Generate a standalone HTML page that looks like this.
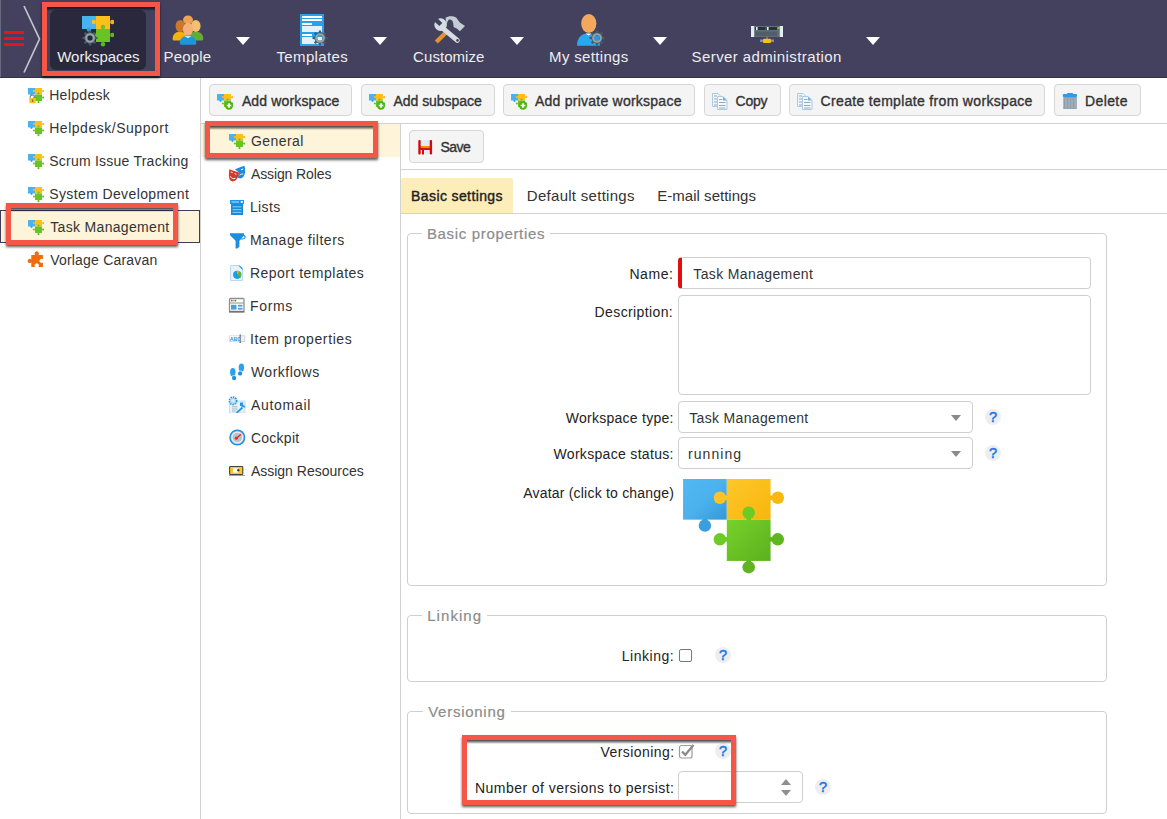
<!DOCTYPE html>
<html><head><meta charset="utf-8">
<style>
*{box-sizing:border-box;margin:0;padding:0}
html,body{width:1167px;height:819px;overflow:hidden;background:#fff}
body{position:relative;font-family:"Liberation Sans",sans-serif;color:#333}
.a{position:absolute}
.t{position:absolute;white-space:nowrap;line-height:1;font-size:14px;color:#333}
.hd{position:absolute;left:0;top:0;width:1167px;height:78px;background:#43415e;border-bottom:1px solid #34314c}
.ht{position:absolute;white-space:nowrap;line-height:1;font-size:15px;color:#eeeeee;top:49px}
.tri{position:absolute;top:37px;width:0;height:0;border-left:7px solid transparent;border-right:7px solid transparent;border-top:8px solid #fff}
.btn{position:absolute;top:84px;height:32px;background:#f4f4f4;border:1px solid #d6d6d6;border-radius:4px}
.bt{position:absolute;white-space:nowrap;line-height:1;font-size:14px;font-weight:normal;color:#333;-webkit-text-stroke:0.35px #333;top:94px}
.red{position:absolute;border:5px solid #f45747;box-shadow:0 2px 2.5px rgba(0,0,0,.65)}
.red::after{content:"";position:absolute;left:0;right:0;top:0;height:4px;background:linear-gradient(rgba(0,0,0,.72),rgba(0,0,0,.45) 45%,rgba(0,0,0,0))}
.fs{position:absolute;left:407px;width:700px;border:1px solid #cfcfcf;border-radius:4px}
.lg{position:absolute;white-space:nowrap;line-height:1;font-size:15px;color:#8c8c8c;-webkit-text-stroke:0.2px #8c8c8c;background:#fff;padding:0 5px}
.lb{position:absolute;white-space:nowrap;line-height:1;font-size:14px;color:#222;text-align:right}
.inp{position:absolute;border:1px solid #cfcfcf;border-radius:4px;background:#fff}
.q{position:absolute;width:16px;height:16px;border-radius:8px;background:#eeeef0;color:#1b78e8;font-weight:normal;-webkit-text-stroke:0.5px #1b78e8;font-size:14.5px;line-height:17px;text-align:center}
.dd{position:absolute;width:0;height:0;border-left:5px solid transparent;border-right:5px solid transparent;border-top:6px solid #8a8a8a}
</style></head><body>

<svg width="0" height="0" style="position:absolute">
<defs>
<symbol id="pz" viewBox="0 0 32 32">
<rect x="0" y="0" width="14" height="13" fill="#4ab3ef"/><circle cx="7" cy="13.6" r="2.2" fill="#3aa0e0"/>
<rect x="14" y="0" width="14" height="13" fill="#fdbf1c"/><circle cx="11.8" cy="6" r="2.2" fill="#fdbf1c"/><circle cx="30.3" cy="6" r="2.2" fill="#f5b414"/>
<rect x="14" y="13" width="14" height="13" fill="#67c424"/><circle cx="21" cy="11" r="2.2" fill="#67c424"/><circle cx="30.3" cy="19" r="2.2" fill="#5fb81e"/><circle cx="21" cy="28.2" r="2.2" fill="#5fb81e"/><circle cx="11.8" cy="19" r="2.2" fill="#67c424"/>
</symbol>
<symbol id="gear" viewBox="0 0 16 16">
<path d="M13.45 6.69 L15.52 6.93 L15.52 9.07 L13.45 9.31 L12.77 10.93 L14.08 12.56 L12.56 14.08 L10.93 12.77 L9.31 13.45 L9.07 15.52 L6.93 15.52 L6.69 13.45 L5.07 12.77 L3.44 14.08 L1.92 12.56 L3.23 10.93 L2.55 9.31 L0.48 9.07 L0.48 6.93 L2.55 6.69 L3.23 5.07 L1.92 3.44 L3.44 1.92 L5.07 3.23 L6.69 2.55 L6.93 0.48 L9.07 0.48 L9.31 2.55 L10.93 3.23 L12.56 1.92 L14.08 3.44 L12.77 5.07Z M10.7 8A2.7 2.7 0 1 0 5.3 8A2.7 2.7 0 1 0 10.7 8Z" fill="#4b5b63" fill-rule="evenodd"/>
<circle cx="8" cy="8" r="3.8" fill="none" stroke="#93a4ad" stroke-width="2.1"/>
</symbol>
<symbol id="plus" viewBox="0 0 10 10">
<circle cx="5" cy="5" r="4.6" fill="#4cb51c"/><path d="M5 2.4V7.6M2.4 5H7.6" stroke="#fff" stroke-width="1.9"/>
</symbol>
<symbol id="copy" viewBox="0 0 16 16">
<path d="M0.5 0.5H6L8 2.5V13.5H0.5Z" fill="#eef6fc" stroke="#a9cbe3" stroke-width="1"/>
<path d="M2 3H5M2 6H5M2 9H5M2 12H5" stroke="#9aa8b6" stroke-width="1.2"/>
<path d="M5.5 3.5H11L15 7.5V16.5H5.5Z" fill="#f4f9fd" stroke="#a9cbe3" stroke-width="1"/>
<path d="M11 3.5V7.5H15Z" fill="#6bb6ea"/>
<path d="M7 6.5H10.5M7 9.5H13.5M7 12.5H13.5M7 15H13.5" stroke="#9aa8b6" stroke-width="1.2"/>
</symbol>
</defs></svg>
<!-- HEADER -->
<div class="hd"></div>
<div class="a" style="left:0;top:0;width:1px;height:77px;background:#6a6880"></div>
<div class="a" style="left:4px;top:31px;width:20px;height:3px;background:#e3141d"></div>
<div class="a" style="left:4px;top:37px;width:20px;height:3px;background:#e3141d"></div>
<div class="a" style="left:4px;top:43px;width:20px;height:3px;background:#e3141d"></div>
<svg class="a" style="left:0;top:0" width="60" height="77"><polyline points="24,6 39.5,39 24,72.5" fill="none" stroke="#c4c4cc" stroke-width="1.7"/></svg>

<div class="a" style="left:50px;top:10px;width:96px;height:60px;background:#2a283d;border-radius:6px"></div>
<div class="red" style="left:42px;top:2px;width:118px;height:74px;"></div>

<div class="ht" style="left:57.2px;letter-spacing:0.004px">Workspaces</div>
<div class="ht" style="left:163.5px;letter-spacing:0.2px">People</div>
<div class="ht" style="left:276.5px;letter-spacing:0.35px">Templates</div>
<div class="ht" style="left:413.1px;letter-spacing:0.054px">Customize</div>
<div class="ht" style="left:549.1px;letter-spacing:0.33px">My settings</div>
<div class="ht" style="left:691.6px;letter-spacing:0.4px">Server administration</div>
<div class="tri" style="left:236px"></div>
<div class="tri" style="left:373px"></div>
<div class="tri" style="left:510px"></div>
<div class="tri" style="left:653px"></div>
<div class="tri" style="left:866px"></div>

<!-- HEADER ICONS -->
<svg class="a" style="left:82px;top:16px" width="34" height="31"><use href="#pz" width="32" height="32"/></svg>
<svg class="a" style="left:82px;top:30px" width="16" height="16"><use href="#gear" width="16" height="16"/></svg>

<svg class="a" style="left:168px;top:12px" width="36" height="34" viewBox="168 12 36 34">
<ellipse cx="188" cy="19.8" rx="5" ry="4.4" fill="#efa455"/>
<path d="M172.6 39C172.6 34.5 175.5 31.8 180 31.8C184.5 31.8 187 34.5 187 40.6H174.5C173.3 40.6 172.6 40 172.6 39Z" fill="#f3b30a"/>
<ellipse cx="180.3" cy="26.1" rx="4.8" ry="6.1" fill="#c9782c"/>
<path d="M189 40.6C189 34.5 191.5 31.8 196 31.8C200.5 31.8 203.3 34.5 203.3 39C203.3 40 202.6 40.6 201.5 40.6Z" fill="#63ad36"/>
<ellipse cx="195.8" cy="26" rx="4.8" ry="6.1" fill="#f3c06f"/>
<path d="M179.8 43C179.8 38.5 183 35.8 188 35.8C193 35.8 196.3 38.5 196.3 43C196.3 44.2 195.5 44.8 194.3 44.8H181.8C180.6 44.8 179.8 44.2 179.8 43Z" fill="#1b97de"/>
<path d="M184.5 36.3H191.5L188 38Z" fill="#fff"/>
<ellipse cx="188" cy="29.3" rx="5.1" ry="6.5" fill="#f5b07a"/>
</svg>

<svg class="a" style="left:299px;top:13px" width="30" height="34" viewBox="299 13 30 34">
<rect x="300" y="14" width="24" height="32" fill="#28a0ea"/>
<rect x="302" y="16" width="20" height="2" fill="#fff"/><rect x="302" y="19" width="20" height="2" fill="#fff"/>
<rect x="302" y="23" width="10" height="2" fill="#fff"/><rect x="302" y="26" width="20" height="6" fill="#e4f1fb"/>
<rect x="302" y="34" width="10" height="2" fill="#fff"/><rect x="302" y="37" width="20" height="7" fill="#e4f1fb"/>
</svg>
<svg class="a" style="left:312px;top:30px" width="16" height="16"><use href="#gear" width="16" height="16"/></svg>

<svg class="a" style="left:431px;top:14px" width="36" height="32" viewBox="431 14 36 32">
<path d="M436.3 42L446.5 32" stroke="#e3922c" stroke-width="4.4"/>
<path d="M445.5 17.7C448 15.8 453 15.5 456.3 17.7L459.8 22.5L465 26L459.8 31.3L457.1 28.7L453.6 27C453.5 24 453 21.5 452 20.5C451 19.5 449.5 19.3 448.5 20C447.5 21 447 23 446.6 25.2Z" fill="#c3cdd4"/>
<path d="M443.5 28.8L457.3 40.3" stroke="#d5dde3" stroke-width="5" stroke-linecap="round"/>
<circle cx="457.5" cy="40.4" r="1.3" fill="#43415e"/>
<circle cx="440.6" cy="24.6" r="6.3" fill="#d5dde3"/>
<path d="M435.5 16.3L442.3 23L439.3 26L432.2 19.5Z" fill="#43415e"/>
</svg>

<svg class="a" style="left:576px;top:13px" width="30" height="34" viewBox="576 13 30 34">
<path d="M577 45.8C577 38 581 33.5 588 33.5C595 33.5 600 38 600 45.8Z" fill="#2ba7ee"/>
<path d="M585.5 33.5H591.5L588.5 35.5Z" fill="#fff"/>
<ellipse cx="588.8" cy="23.5" rx="7.6" ry="9.6" fill="#f4a85e"/>
</svg>
<svg class="a" style="left:589px;top:30px" width="16" height="16" viewBox="0 0 16 16"><circle cx="8" cy="8" r="2.6" fill="#1e9bef"/><use href="#gear" width="16" height="16"/></svg>

<svg class="a" style="left:750px;top:25px" width="35" height="20" viewBox="750 25 35 20">
<rect x="751" y="26" width="32" height="11" fill="#5f6e78"/>
<rect x="751" y="26" width="3.2" height="11" fill="#e6edf2"/><rect x="779.8" y="26" width="3.2" height="11" fill="#e6edf2"/>
<rect x="755" y="27" width="10.5" height="3" fill="#27333a"/><rect x="766.5" y="27" width="10.5" height="3" fill="#27333a"/>
<rect x="756" y="27" width="1.6" height="3" fill="#e8eef2"/><rect x="767" y="27" width="1.6" height="3" fill="#e8eef2"/>
<rect x="777.5" y="27" width="2" height="2" fill="#6ed02a"/>
<path d="M756 31.5V36M758 31.5V36M760 31.5V36M762 31.5V36M764 31.5V36M766 31.5V36M768 31.5V36M770 31.5V36M772 31.5V36M774 31.5V36M776 31.5V36" stroke="#414d55" stroke-width="0.9"/>
<rect x="766.3" y="37" width="1.4" height="2" fill="#7d8c96"/>
<rect x="760" y="39.5" width="14" height="2.4" fill="#8795a0"/>
<rect x="763" y="38.7" width="8" height="4.4" rx="1" fill="#f9c112"/>
</svg>

<!-- COLUMNS -->
<div class="a" style="left:200px;top:78px;width:1px;height:741px;background:#d2d2d2"></div>
<div class="a" style="left:201px;top:123px;width:966px;height:1px;background:#d2d2d2"></div>
<div class="a" style="left:400px;top:124px;width:1px;height:695px;background:#d2d2d2"></div>
<div class="a" style="left:401px;top:169px;width:766px;height:1px;background:#d2d2d2"></div>
<div class="a" style="left:401px;top:213px;width:766px;height:1px;background:#d2d2d2"></div>

<!-- SIDEBAR -->
<div class="a" style="left:0;top:210px;width:200px;height:33px;background:#fdf4d9;border:1px solid #3f3c5a"></div>
<div class="t" style="left:49.2px;top:88px;letter-spacing:0.327px">Helpdesk</div>
<div class="t" style="left:49.2px;top:121px;letter-spacing:0.523px">Helpdesk/Support</div>
<div class="t" style="left:49.2px;top:154px;letter-spacing:0.236px">Scrum Issue Tracking</div>
<div class="t" style="left:49.2px;top:187px;letter-spacing:0.385px">System Development</div>
<div class="t" style="left:50.2px;top:220px;letter-spacing:0.332px">Task Management</div>
<div class="t" style="left:50.2px;top:253px;letter-spacing:0.2px">Vorlage Caravan</div>
<div class="red" style="left:6px;top:203px;width:172px;height:42px"></div>

<!-- MIDDLE -->
<div class="a" style="left:201px;top:124px;width:199px;height:33px;background:#fdf4d9"></div>
<div class="t" style="left:250.9px;top:134px;letter-spacing:0.453px">General</div>
<div class="t" style="left:250.9px;top:167px;letter-spacing:-0.103px">Assign Roles</div>
<div class="t" style="left:249.9px;top:200px;letter-spacing:0.375px">Lists</div>
<div class="t" style="left:249.9px;top:233px;letter-spacing:0.499px">Manage filters</div>
<div class="t" style="left:249.9px;top:266px;letter-spacing:0.487px">Report templates</div>
<div class="t" style="left:249.9px;top:299px;letter-spacing:0.7px">Forms</div>
<div class="t" style="left:249.9px;top:332px;letter-spacing:0.605px">Item properties</div>
<div class="t" style="left:250.9px;top:365px;letter-spacing:0.496px">Workflows</div>
<div class="t" style="left:250.9px;top:398px;letter-spacing:0.726px">Automail</div>
<div class="t" style="left:250.9px;top:431px;letter-spacing:0.263px">Cockpit</div>
<div class="t" style="left:250.9px;top:464px;letter-spacing:-0.004px">Assign Resources</div>
<div class="red" style="left:205px;top:121px;width:173px;height:37px"></div>

<!-- SIDEBAR ICONS -->
<svg class="a" style="left:28px;top:88px" width="17" height="16"><use href="#pz" width="16" height="16"/>
<path d="M2.2 10.5V9.3C2.2 7.8 3.2 7 4.5 7C5.8 7 6.8 7.8 6.8 9.3V10.5" fill="none" stroke="#7d8a96" stroke-width="1.1"/>
<rect x="1.3" y="10" width="6.4" height="5.2" fill="#f6c417"/><rect x="3.9" y="11.5" width="1.2" height="2.3" fill="#6a6a6a"/></svg>
<svg class="a" style="left:28px;top:121px" width="17" height="16"><use href="#pz" width="16" height="16"/></svg>
<svg class="a" style="left:28px;top:154px" width="17" height="16"><use href="#pz" width="16" height="16"/></svg>
<svg class="a" style="left:28px;top:187px" width="17" height="16"><use href="#pz" width="16" height="16"/></svg>
<svg class="a" style="left:28px;top:220px" width="17" height="16"><use href="#pz" width="16" height="16"/></svg>
<svg class="a" style="left:27px;top:251px" width="18" height="18" viewBox="0 0 18 18">
<path d="M4.3 4H8.2A2.1 2.1 0 1 1 11.3 4H15.9V8.2A2.1 2.1 0 1 0 15.9 11.6V15.9H11.3A2.1 2.1 0 1 0 8.2 15.9H4.3V11.4A2.1 2.1 0 1 1 4.3 8.4Z" fill="#ee6c0c"/>
</svg>

<!-- MIDDLE ICONS -->
<svg class="a" style="left:229px;top:134px" width="17" height="16"><use href="#pz" width="16" height="16"/></svg>
<svg class="a" style="left:224px;top:163px" width="24" height="24" viewBox="224 163 24 24">
<path d="M235 169.3C238 168 241 166.8 244.3 165.8C245.6 169 245.6 173.5 243.6 176.5C242 178.6 239.5 178.9 237.5 177.6L238.8 172.5Z" fill="#1e8ad8"/>
<path d="M241 169.6L243.3 169.1M239.6 175.2C240.8 174.2 242 173.9 243.2 174" stroke="#fff" stroke-width="1" fill="none"/>
<path d="M229.2 169.3L238.9 172.4C238.7 176 237.2 180 233.7 181.3C230.6 181.9 229 179.2 228.9 176Z" fill="#d9372b"/>
<path d="M230.8 172L232.6 172.6M234.6 173.6L236.4 174.3M230.3 176.3C231.3 178.6 233.6 179.2 235.4 178.2" stroke="#fff" stroke-width="1" fill="none"/>
</svg>
<svg class="a" style="left:229px;top:199px" width="16" height="17" viewBox="0 0 16 17">
<rect x="1" y="1" width="14" height="4" fill="#1e95e6"/><rect x="2" y="5" width="12" height="11" fill="#1a8ad9"/>
<rect x="2.5" y="2.3" width="7.5" height="1.3" fill="#8fd0f7"/><rect x="11.8" y="2" width="2" height="1.8" fill="#fff"/>
<rect x="3.5" y="7.2" width="9" height="1.2" fill="#7cc4f0"/><rect x="3.5" y="10" width="9" height="1.2" fill="#7cc4f0"/><rect x="3.5" y="12.8" width="9" height="1.2" fill="#7cc4f0"/>
</svg>
<svg class="a" style="left:229px;top:232px" width="17" height="17" viewBox="0 0 17 17">
<path d="M1 1.2H15V3.4L10.4 8.8V14.8L8.3 16.5H6.6V8.8L1 3.2Z" fill="#1a8fe0"/>
<path d="M12.5 3.3C15.5 3 16.3 4.2 16 5.5C15.8 6.8 14 7 11.5 7" fill="none" stroke="#1a8fe0" stroke-width="1.2"/>
</svg>
<svg class="a" style="left:229px;top:264px" width="16" height="18" viewBox="0 0 16 18">
<path d="M1.5 1.5H9.5L13.5 5.5V16.5H1.5Z" fill="#e6f3fb" stroke="#bcd8ea" stroke-width="1"/>
<path d="M9.3 1.5L13.7 5.9V4.3L10.8 1.5Z" fill="#2693de"/>
<circle cx="8.2" cy="10.8" r="4.1" fill="#1d9be8"/>
<path d="M8.2 10.8L7.6 6.7A4.1 4.1 0 0 1 10.9 7.8Z" fill="#fca50f"/>
<path d="M8.2 10.8L10.9 7.8A4.1 4.1 0 0 1 11.2 13.7Z" fill="#5cb72a"/>
</svg>
<svg class="a" style="left:228px;top:297px" width="18" height="17" viewBox="0 0 18 17">
<rect x="1.5" y="1.5" width="14.5" height="13" rx="1" fill="#fff" stroke="#8c9197" stroke-width="1.3"/>
<rect x="1.5" y="5.5" width="14.5" height="1" fill="#8c9197"/><rect x="1" y="14" width="15.5" height="1.6" fill="#6f7479"/>
<circle cx="3.8" cy="3.6" r="0.9" fill="#d33"/><circle cx="5.6" cy="3.6" r="0.9" fill="#f5a700"/><circle cx="7.4" cy="3.6" r="0.9" fill="#2a9a2a"/>
<rect x="3" y="7.8" width="5.5" height="4.8" fill="#4d9fd6"/><rect x="10" y="7.8" width="4.5" height="1.8" fill="#4d9fd6"/><rect x="10" y="10.8" width="4.5" height="1.8" fill="#4d9fd6"/>
</svg>
<svg class="a" style="left:228px;top:334px" width="18" height="11" viewBox="0 0 18 11">
<rect x="1.3" y="1.8" width="9.8" height="5.8" fill="#fff" stroke="#d5d8dc" stroke-width="0.8"/>
<text x="1.8" y="7" font-family="Liberation Sans" font-weight="bold" font-size="5.2" fill="#2d92e0">ABC</text>
<rect x="12.2" y="1.8" width="4.6" height="5.8" fill="#eef2f6" stroke="#c5ccd3" stroke-width="0.8"/>
<path d="M11.5 1H13M12.2 1V8.5M11.5 8.5H13" stroke="#5b6772" stroke-width="0.9"/>
</svg>
<svg class="a" style="left:229px;top:363px" width="16" height="18" viewBox="0 0 16 18">
<ellipse cx="3.8" cy="9.2" rx="2.7" ry="4.2" fill="#2aa0f0"/><ellipse cx="5.1" cy="15" rx="2.1" ry="2.2" fill="#1a8ee2"/>
<ellipse cx="12.4" cy="4.6" rx="2.7" ry="4.2" fill="#2aa0f0"/><ellipse cx="11.1" cy="10.4" rx="2.1" ry="2.2" fill="#1a8ee2"/>
<path d="M3.2 12.8L6 12.6M10.5 8.2L13 8" stroke="#fff" stroke-width="0.6"/>
</svg>
<svg class="a" style="left:228px;top:396px" width="18" height="17" viewBox="0 0 18 17">
<rect x="1.5" y="5" width="15.5" height="12" fill="#e4f2fb" stroke="#bcd6e8" stroke-width="0.8"/>
<rect x="12" y="6.5" width="3" height="3.5" fill="#2396e6"/>
<path d="M4 10.8H9.5M4 13H9.5M4 15H7.5" stroke="#9db0bf" stroke-width="0.9"/>
<circle cx="5" cy="4.8" r="3.7" fill="none" stroke="#2c97e4" stroke-width="1.6" stroke-dasharray="1.6 0.8"/><circle cx="5" cy="4.8" r="2.6" fill="#d5eaf9" stroke="#6bb8ec" stroke-width="0.7"/>
<path d="M8.5 17L14.5 11.5M13.5 10.5C14.5 9.5 16.5 10 16.5 11.5" stroke="#2c97e4" stroke-width="1.8" fill="none"/>
</svg>
<svg class="a" style="left:229px;top:429px" width="17" height="17" viewBox="0 0 17 17">
<circle cx="8.3" cy="8.5" r="7.3" fill="#b9c5cd" stroke="#1e8fe0" stroke-width="1.5"/>
<circle cx="8.3" cy="8.5" r="5.4" fill="none" stroke="#eef2f5" stroke-width="1.2"/>
<path d="M7 9.8L12 5.2" stroke="#e22a22" stroke-width="1.4"/><circle cx="7.3" cy="9.2" r="1.6" fill="#e6302a"/>
</svg>
<svg class="a" style="left:228px;top:465px" width="18" height="12" viewBox="0 0 18 12">
<rect x="1.6" y="1.5" width="13.2" height="8" rx="0.8" fill="#fcc52c" stroke="#3f4248" stroke-width="1.1"/>
<rect x="5.2" y="3.2" width="5" height="4.4" fill="#fff"/><circle cx="10.3" cy="5.2" r="1.2" fill="#3f4248"/>
<rect x="1" y="10" width="16" height="1" fill="#9aa3ad"/>
</svg>

<!-- TOOLBAR -->
<div class="btn" style="left:209px;width:143px"></div>
<div class="btn" style="left:361px;width:134px"></div>
<div class="btn" style="left:503px;width:192px"></div>
<div class="btn" style="left:704px;width:77px"></div>
<div class="btn" style="left:789px;width:256px"></div>
<div class="btn" style="left:1054px;width:87px"></div>
<div class="bt" style="left:241.9px;letter-spacing:0.143px">Add workspace</div>
<div class="bt" style="left:393.6px;letter-spacing:-0.06px">Add subspace</div>
<div class="bt" style="left:535px;letter-spacing:0.24px">Add private workspace</div>
<div class="bt" style="left:735.6px;letter-spacing:-0.251px">Copy</div>
<div class="bt" style="left:820.6px;letter-spacing:0.328px">Create template from workspace</div>
<div class="bt" style="left:1085px;letter-spacing:0.39px">Delete</div>

<svg class="a" style="left:217px;top:94px" width="18" height="18" viewBox="0 0 18 18"><use href="#pz" width="16" height="16"/><use href="#plus" x="7.5" y="7" width="9" height="9"/></svg>
<svg class="a" style="left:369px;top:94px" width="18" height="18" viewBox="0 0 18 18"><use href="#pz" width="16" height="16"/><use href="#plus" x="7.5" y="7" width="9" height="9"/></svg>
<svg class="a" style="left:511px;top:94px" width="18" height="18" viewBox="0 0 18 18"><use href="#pz" width="16" height="16"/><use href="#plus" x="7.5" y="7" width="9" height="9"/></svg>
<svg class="a" style="left:712px;top:92px" width="16" height="18"><use href="#copy" width="16" height="18"/></svg>
<svg class="a" style="left:797px;top:92px" width="16" height="18"><use href="#copy" width="16" height="18"/></svg>
<svg class="a" style="left:1062px;top:92px" width="16" height="18" viewBox="0 0 16 18">
<rect x="5" y="1" width="6" height="2" rx="0.6" fill="#2a9de8"/><rect x="0.8" y="2" width="14.2" height="3" rx="1" fill="#2a9de8"/>
<rect x="1.3" y="5" width="13.5" height="12" fill="#8f9fab"/>
<path d="M4 6V16.5M7 6V16.5M10 6V16.5M13 6V16.5" stroke="#aebbc4" stroke-width="1"/>
</svg>

<!-- SAVE -->
<div class="btn" style="left:409px;top:130px;width:75px;height:33px"></div>
<div class="bt" style="left:440.5px;top:140px;letter-spacing:-0.517px">Save</div>
<svg class="a" style="left:418px;top:139px" width="15" height="16" viewBox="0 0 15 16">
<rect x="2.5" y="1" width="9.5" height="6" fill="#dcecf8"/>
<rect x="2" y="7" width="11" height="2" fill="#fb8a0c"/><rect x="2" y="9" width="11" height="2" fill="#d11515"/>
<rect x="0.3" y="1" width="2.4" height="14.5" rx="1" fill="#d50a0a"/><rect x="11.7" y="1" width="2.4" height="14.5" rx="1" fill="#d50a0a"/>
<rect x="4" y="11" width="2" height="4.5" fill="#d50a0a"/><rect x="6.5" y="11" width="4" height="4.5" fill="#e6eaee"/>
</svg>

<!-- TABS -->
<div class="a" style="left:401px;top:178px;width:112px;height:35px;background:#fdedb9;border-radius:3px 3px 0 0"></div>
<div class="t" style="left:411.1px;top:189px;-webkit-text-stroke:0.4px #222;color:#222;letter-spacing:0.389px">Basic settings</div>
<div class="t" style="left:526.8px;top:188px;font-size:15px;letter-spacing:0.286px">Default settings</div>
<div class="t" style="left:657.3px;top:188px;font-size:15px;letter-spacing:0.02px">E-mail settings</div>

<!-- FIELDSET BASIC -->
<div class="fs" style="top:233px;height:353px"></div>
<div class="lg" style="left:421.9px;top:226px;letter-spacing:0.666px">Basic properties</div>
<div class="lb" style="left:629.4px;top:267px;letter-spacing:0.58px">Name:</div>
<div class="lb" style="left:594.6px;top:305px;letter-spacing:0.384px">Description:</div>
<div class="lb" style="left:565.7px;top:411px;letter-spacing:0.265px">Workspace type:</div>
<div class="lb" style="left:553.5px;top:447px;letter-spacing:0.317px">Workspace status:</div>
<div class="lb" style="left:523.2px;top:486px;letter-spacing:0.206px">Avatar (click to change)</div>

<div class="inp" style="left:678px;top:257px;width:413px;height:32px;border-left:4px solid #e30d0d"></div>
<div class="t" style="left:693.3px;top:267px;letter-spacing:0.367px">Task Management</div>
<div class="inp" style="left:678px;top:295px;width:413px;height:100px"></div>
<div class="inp" style="left:678px;top:401px;width:295px;height:32px"></div>
<div class="t" style="left:689.3px;top:411px;letter-spacing:0.325px">Task Management</div>
<div class="dd" style="left:951px;top:415px"></div>
<div class="inp" style="left:678px;top:437px;width:295px;height:32px"></div>
<div class="t" style="left:688px;top:447px;letter-spacing:1.073px">running</div>
<div class="dd" style="left:951px;top:451px"></div>
<div class="q" style="left:985px;top:409px">?</div>
<div class="q" style="left:985px;top:445px">?</div>

<svg class="a" style="left:683px;top:479px" width="102" height="96" viewBox="0 0 32.6 30.7">
<defs><linearGradient id="gb" x1="0" y1="0" x2="1" y2="1"><stop offset="0" stop-color="#52b8f2"/><stop offset="0.5" stop-color="#4cb2ee"/><stop offset="1" stop-color="#3598d8"/></linearGradient>
<linearGradient id="gy" x1="0" y1="0" x2="1" y2="1"><stop offset="0" stop-color="#fec72a"/><stop offset="1" stop-color="#f8b60c"/></linearGradient>
<linearGradient id="gg" x1="0" y1="0" x2="1" y2="1"><stop offset="0" stop-color="#76d22a"/><stop offset="1" stop-color="#5cb01e"/></linearGradient></defs>
<rect x="0" y="0" width="14" height="13" fill="url(#gb)"/><rect x="6.3" y="12.8" width="1.4" height="2.2" fill="#3a9fde"/><circle cx="7" cy="14.9" r="2" fill="#3a9fde"/>
<rect x="14" y="0" width="14" height="13" fill="url(#gy)"/>
<rect x="11.8" y="5.3" width="2.5" height="1.4" fill="#fec425"/><circle cx="11.8" cy="6" r="2" fill="#fec425"/>
<rect x="27.5" y="5.3" width="2.8" height="1.4" fill="#f9b80f"/><circle cx="30.3" cy="6" r="2" fill="#f9b80f"/>
<rect x="14" y="13" width="14" height="13.2" fill="url(#gg)"/>
<rect x="20.3" y="10.8" width="1.4" height="2.5" fill="#6ccb25"/><circle cx="21" cy="10.8" r="2" fill="#6ccb25"/>
<rect x="11.8" y="18.6" width="2.5" height="1.4" fill="#6ccb25"/><circle cx="11.8" cy="19.3" r="2" fill="#6ccb25"/>
<rect x="27.5" y="18.6" width="2.8" height="1.4" fill="#5fb51f"/><circle cx="30.3" cy="19.3" r="2" fill="#5fb51f"/>
<rect x="20.3" y="26" width="1.4" height="2.2" fill="#5fb51f"/><circle cx="21" cy="28.2" r="2" fill="#5fb51f"/>
</svg>

<!-- FIELDSET LINKING -->
<div class="fs" style="top:615px;height:67px"></div>
<div class="lg" style="left:422.2px;top:608px;letter-spacing:1.06px">Linking</div>
<div class="lb" style="left:621.8px;top:649px;letter-spacing:0.522px">Linking:</div>
<div class="a" style="left:679px;top:649px;width:13px;height:13px;border:1px solid #777;border-radius:2px;background:#fff"></div>
<div class="q" style="left:715px;top:647px">?</div>

<!-- FIELDSET VERSIONING -->
<div class="fs" style="top:711px;height:103px"></div>
<div class="lg" style="left:423.2px;top:704px;letter-spacing:0.735px">Versioning</div>
<div class="lb" style="left:600.4px;top:745px;letter-spacing:0.45px">Versioning:</div>
<div class="lb" style="left:475.0px;top:781px;letter-spacing:0.449px">Number of versions to persist:</div>
<svg class="a" style="left:678px;top:743px" width="18" height="16" viewBox="0 0 18 16">
<rect x="1.5" y="2.5" width="12.5" height="12.5" rx="2" fill="#fff" stroke="#9b9b9b" stroke-width="1.2"/>
<path d="M4 8.5L7.3 11.8L15.5 2" fill="none" stroke="#8a8a8a" stroke-width="2.2"/></svg>
<div class="q" style="left:715px;top:743px">?</div>
<div class="inp" style="left:678px;top:771px;width:125px;height:32px"></div>
<svg class="a" style="left:780px;top:777px" width="12" height="20" viewBox="0 0 12 20">
<path d="M1 8L6 2L11 8Z" fill="#8f8f8f"/><path d="M1 13L6 19L11 13Z" fill="#8f8f8f"/></svg>
<div class="q" style="left:815px;top:779px">?</div>
<div class="red" style="left:462px;top:735px;width:274px;height:70px"></div>

</body></html>
